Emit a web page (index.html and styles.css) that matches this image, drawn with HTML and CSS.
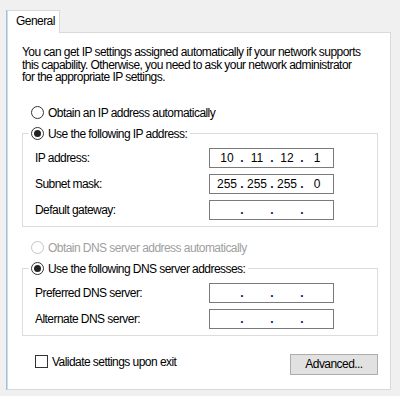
FILE: index.html
```html
<!DOCTYPE html>
<html>
<head>
<meta charset="utf-8">
<link rel="stylesheet" href="styles.css">
</head>
<body>
<div class="dialog">
  <div class="tabs"><div class="tab">General</div></div>
  <div class="panel">
    <p class="intro">You can get IP settings assigned automatically if your network supports<br>this capability. Otherwise, you need to ask your network administrator<br>for the appropriate IP settings.</p>

    <div class="option"><span class="radio"></span><span>Obtain an IP address automatically</span></div>

    <fieldset class="group">
      <legend class="option"><span class="radio checked"></span><span>Use the following IP address:</span></legend>
      <div class="fields">
        <span class="label">IP address:</span>
        <div class="ip"><span class="oct">10</span><span class="dot">.</span><span class="oct">11</span><span class="dot">.</span><span class="oct">12</span><span class="dot">.</span><span class="oct">1</span></div>
        <span class="label">Subnet mask:</span>
        <div class="ip"><span class="oct">255</span><span class="dot">.</span><span class="oct">255</span><span class="dot">.</span><span class="oct">255</span><span class="dot">.</span><span class="oct">0</span></div>
        <span class="label">Default gateway:</span>
        <div class="ip"><span class="oct"></span><span class="dot">.</span><span class="oct"></span><span class="dot">.</span><span class="oct"></span><span class="dot">.</span><span class="oct"></span></div>
      </div>
    </fieldset>

    <div class="option disabled dns-auto"><span class="radio"></span><span>Obtain DNS server address automatically</span></div>

    <fieldset class="group group-dns">
      <legend class="option"><span class="radio checked"></span><span>Use the following DNS server addresses:</span></legend>
      <div class="fields">
        <span class="label">Preferred DNS server:</span>
        <div class="ip"><span class="oct"></span><span class="dot">.</span><span class="oct"></span><span class="dot">.</span><span class="oct"></span><span class="dot">.</span><span class="oct"></span></div>
        <span class="label">Alternate DNS server:</span>
        <div class="ip"><span class="oct"></span><span class="dot">.</span><span class="oct"></span><span class="dot">.</span><span class="oct"></span><span class="dot">.</span><span class="oct"></span></div>
      </div>
    </fieldset>

    <div class="footer">
      <div class="check-row"><span class="checkbox"></span><span>Validate settings upon exit</span></div>
      <button class="btn">Advanced...</button>
    </div>
  </div>
</div>
</body>
</html>
```

FILE: styles.css
```css
html, body {
  margin: 0;
  padding: 0;
  background: #f0f0f0;
}
body {
  width: 400px;
  height: 396px;
  overflow: hidden;
  font-family: "Liberation Sans", Arial, sans-serif;
  font-size: 12px;
  letter-spacing: -0.55px;
  color: #000;
}
.dialog {
  margin: 10px 0 0 6px;
  width: 384px;
  border-left: 1px solid #99c4ea;
  height: 380px;
}
.tabs {
  display: flex;
  height: 22px;
}
.tab {
  position: relative;
  z-index: 1;
  box-sizing: border-box;
  width: 53px;
  height: 23px;
  border: 1px solid #d9d9d9;
  border-bottom: none;
  background: #fff;
  padding-left: 8px;
  line-height: 21px;
}
.panel {
  box-sizing: border-box;
  height: 358px;
  background: #fff;
  border: 1px solid #d9d9d9;
  padding: 13px 11px 0 14px;
}
.intro {
  margin: 0;
  line-height: 12.5px;
}
.option {
  display: flex;
  align-items: center;
  height: 16px;
  gap: 4px;
  white-space: nowrap;
}
.intro + .option {
  margin-top: 21px;
  padding-left: 9px;
}
.radio {
  box-sizing: border-box;
  width: 13px;
  height: 13px;
  border-radius: 50%;
  border: 1px solid #333;
  background: #fff;
  display: flex;
  align-items: center;
  justify-content: center;
  flex: none;
}
.radio.checked::after {
  content: "";
  width: 7px;
  height: 7px;
  border-radius: 50%;
  background: #222;
}
.disabled { color: #a0a0a0; }
.disabled .radio { border-color: #c4c4c4; }
.group {
  margin: 5px 0 0 0;
  padding: 0 0 6px 0;
  border: 1px solid #dcdcdc;
  min-width: 0;
  width: 356px;
  box-sizing: border-box;
}
.group legend {
  margin-left: 6px;
  padding: 0 3px 0 2px;
}
.fields {
  display: grid;
  grid-template-columns: 174px 125px;
  row-gap: 6px;
  align-items: center;
  margin: 6px 0 0 12px;
}
.ip {
  box-sizing: border-box;
  height: 20px;
  border: 1px solid #7a7a7a;
  display: flex;
  align-items: center;
  padding-left: 5px;
  letter-spacing: 0;
}
.oct {
  width: 24px;
  text-align: center;
}
.dot {
  width: 6px;
  text-align: center;
  color: #10104a;
  font-weight: bold;
}
.dns-auto {
  margin-top: 13px;
  padding-left: 9px;
}
.group-dns { margin-top: 5px; }
.footer {
  display: flex;
  justify-content: space-between;
  align-items: flex-start;
  width: 356px;
  margin-top: 18px;
  padding-left: 13px;
  box-sizing: border-box;
}
.check-row {
  display: flex;
  align-items: center;
  gap: 4px;
  height: 16px;
}
.checkbox {
  box-sizing: border-box;
  width: 13px;
  height: 13px;
  border: 1px solid #333;
  background: #fff;
}
.btn {
  box-sizing: border-box;
  width: 88px;
  height: 21px;
  background: #e1e1e1;
  border: 1px solid #adadad;
  font: inherit;
  letter-spacing: inherit;
  color: #000;
  padding: 0;
}
```
